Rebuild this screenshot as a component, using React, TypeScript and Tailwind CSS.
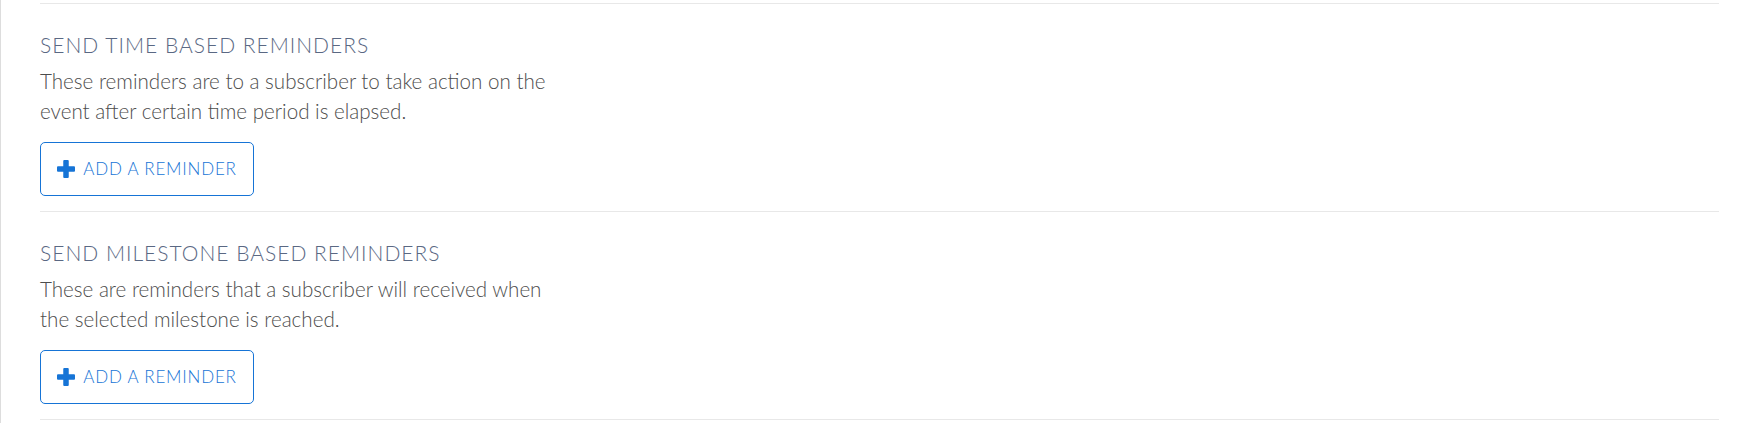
import React from "react";

const sections = [
  {
    title: "SEND TIME BASED REMINDERS",
    text: [
      "These reminders are to a subscriber to take action on the",
      "event after certain time period is elapsed.",
    ],
  },
  {
    title: "SEND MILESTONE BASED REMINDERS",
    text: [
      "These are reminders that a subscriber will received when",
      "the selected milestone is reached.",
    ],
  },
];

function PlusIcon() {
  return (
    <svg width="18" height="18" viewBox="0 0 18 18" className="shrink-0">
      <rect x="6.25" y="0" width="5.5" height="18" rx="1" fill="#1674d6" />
      <rect x="0" y="6.25" width="18" height="5.5" rx="1" fill="#1674d6" />
    </svg>
  );
}

export default function App() {
  return (
    <div
      className="min-h-[423px] bg-white border-l border-[#dddddd] pl-[39px] pr-[37px] pt-[3px]"
      style={{ fontFamily: "Lato, 'Open Sans', sans-serif" }}
    >
      {sections.map((s) => (
        <section key={s.title} className="border-t border-[#e8e8e8] pt-[27px] pb-[15px]">
          <h2 className="text-[21px] leading-[28px] font-light tracking-[1px] text-[#5a6883]">
            {s.title}
          </h2>
          <p className="mt-[7px] text-[20.6px] leading-[30px] font-light text-[#4d4d4d]">
            {s.text[0]}
            <br />
            {s.text[1]}
          </p>
          <button className="mt-[16px] w-[214px] h-[54px] flex items-center justify-center gap-[8px] border border-[#1674d6] rounded-[5px] text-[#1674d6] text-[17px] font-light tracking-[0.8px]">
            <PlusIcon />
            <span>ADD A REMINDER</span>
          </button>
        </section>
      ))}
      <div className="border-t border-[#e8e8e8]" />
    </div>
  );
}
